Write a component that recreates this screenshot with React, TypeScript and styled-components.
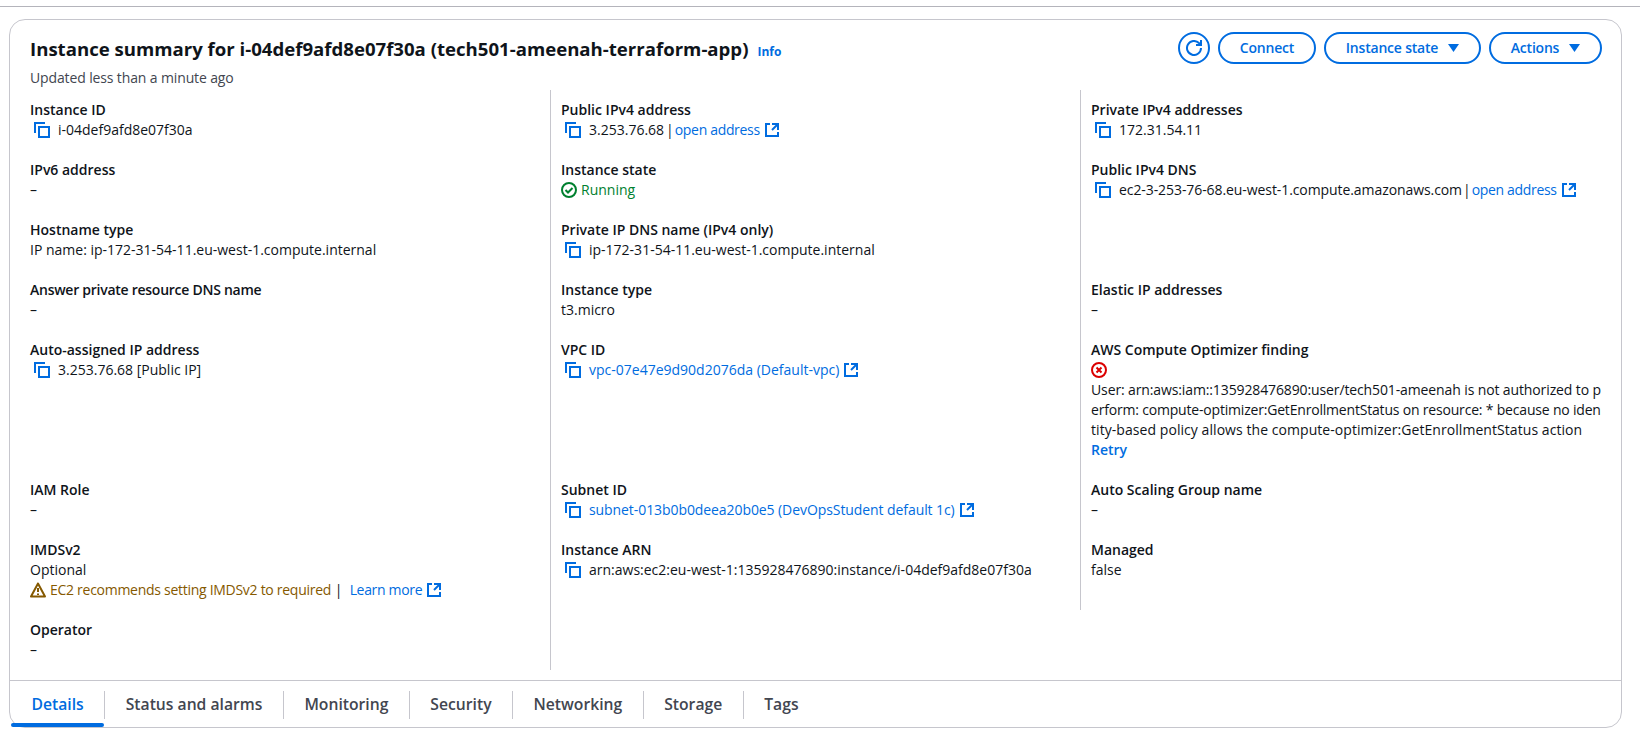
import React from 'react';
import styled, { createGlobalStyle } from 'styled-components';

const GlobalStyle = createGlobalStyle`
    html, body {
        margin: 0;
        padding: 0;
        background: #fff;
        overflow: hidden;
    }
    body {
        font-family: 'Open Sans', 'Noto Sans', sans-serif;
        font-size: 14px;
        line-height: 20px;
        color: #0f141a;
    }
`;

const Page = styled.div`
    width: 1640px;
    height: 729px;
    box-sizing: border-box;
    padding: 6px 18px 0 9px;
`;

const TopRule = styled.div`
    height: 1px;
    margin: 0 -18px 12px -9px;
    background: #b4b4bb;
`;

const Card = styled.section`
    height: 709px;
    box-sizing: border-box;
    border: 1px solid #c6c6cd;
    border-radius: 16px;
    display: flex;
    flex-direction: column;
`;

const Header = styled.header`
    height: 70px;
    box-sizing: border-box;
    padding: 12px 19px 0 20px;
    display: flex;
    justify-content: space-between;
    align-items: flex-start;
`;

const TitleBlock = styled.div`
    padding-top: 4px;
`;

const TitleRow = styled.div`
    display: flex;
    align-items: baseline;
    gap: 9px;
`;

const Title = styled.h1`
    margin: 0;
    font-size: 18.6px;
    line-height: 26px;
    font-weight: 700;
`;

const InfoLink = styled.a`
    font-size: 12px;
    font-weight: 700;
    color: #006ce0;
`;

const Updated = styled.div`
    margin-top: 6px;
    color: #424650;
    letter-spacing: -0.13px;
`;

const Actions = styled.div`
    display: flex;
    align-items: center;
    gap: 8px;
`;

const IconButton = styled.button`
    width: 32px;
    height: 32px;
    padding: 0;
    border: 2px solid #006ce0;
    border-radius: 50%;
    background: #fff;
    color: #006ce0;
    display: flex;
    align-items: center;
    justify-content: center;
`;

const PillButton = styled.button<{ $width: number }>`
    width: ${(props): number => props.$width}px;
    height: 32px;
    padding: 0;
    border: 2px solid #006ce0;
    border-radius: 20px;
    background: #fff;
    color: #006ce0;
    font: 600 14px/20px 'Open Sans', 'Noto Sans', sans-serif;
    letter-spacing: -0.2px;
    display: flex;
    align-items: center;
    justify-content: center;
    gap: 10px;
`;

const Grid = styled.div`
    flex: 1;
    display: grid;
    grid-template-columns: 540px 530px 1fr;
    margin-bottom: 10px;
`;

const Cell = styled.div<{ $divider?: boolean }>`
    box-sizing: border-box;
    padding: 10px 20px 10px ${(props): string => (props.$divider ? '10px' : '20px')};
    border-left: ${(props): string => (props.$divider ? '1px solid #c6c6cd' : 'none')};
`;

const Label = styled.div<{ $tight?: boolean }>`
    font-weight: 600;
    ${(props): string => (props.$tight ? 'letter-spacing: -0.26px;' : '')}
`;

const Value = styled.div`
    display: flex;
    align-items: center;
    white-space: pre;
`;

const CopyWrap = styled.span`
    display: inline-flex;
    margin: 0 8px 0 4px;
    color: #006ce0;
`;

const Link = styled.a<{ $tight?: boolean }>`
    color: #006ce0;
    ${(props): string => (props.$tight ? 'letter-spacing: -0.33px;' : '')}
`;

const ExternalWrap = styled.span`
    display: inline-flex;
    margin-left: 4px;
    color: #006ce0;
`;

const Pipe = styled.span<{ $before: number }>`
    margin: 0 1px 0 ${(props): number => props.$before}px;
`;

const Status = styled.div<{ $color: string }>`
    min-height: 20px;
    display: flex;
    align-items: center;
    gap: 4px;
    color: ${(props): string => props.$color};
    white-space: pre;
`;

const Tight = styled.span<{ $by: number }>`
    letter-spacing: ${(props): number => props.$by}px;
`;

const ErrorLine = styled.div<{ $by: number }>`
    white-space: pre;
    letter-spacing: ${(props): number => props.$by}px;
`;

const RetryLink = styled.a`
    display: block;
    font-weight: 600;
    color: #006ce0;
`;

const Tabs = styled.nav`
    height: 47px;
    box-sizing: border-box;
    border-top: 1px solid #c6c6cd;
    display: flex;
    align-items: flex-start;
    padding: 10px 0 0 1px;
`;

const Tab = styled.div<{ $active?: boolean; $last?: boolean }>`
    position: relative;
    height: 28px;
    box-sizing: border-box;
    padding: 3px 20.5px 0;
    font-size: 15.7px;
    font-weight: 600;
    color: ${(props): string => (props.$active ? '#006ce0' : '#424650')};
    border-right: ${(props): string => (props.$last ? 'none' : '1px solid #c6c6cd')};
    ${(props): string =>
        props.$active
            ? `&::after {
                content: '';
                position: absolute;
                left: 0;
                right: 0;
                bottom: -8px;
                height: 4px;
                border-radius: 2px;
                background: #006ce0;
            }`
            : ''}
`;

const Svg = styled.svg`
    display: block;
    fill: none;
    stroke: currentColor;
    stroke-width: 2;
    flex: none;
`;

const CopyIcon: React.FC = () => (
    <CopyWrap>
        <Svg width="16" height="16" viewBox="0 0 16 16">
            <path d="M1 11V1h10" />
            <path d="M5 5h10v10H5z" />
        </Svg>
    </CopyWrap>
);

const ExternalIcon: React.FC = () => (
    <ExternalWrap>
        <Svg width="16" height="16" viewBox="0 0 16 16">
            <path d="M14 8V2H8" />
            <path d="M14 2 8 8" />
            <path d="M6 2H2v12h12v-4" />
        </Svg>
    </ExternalWrap>
);

const RefreshIcon: React.FC = () => (
    <Svg width="16" height="16" viewBox="0 0 16 16">
        <path d="M10 5h5V0" />
        <path d="M15 8a7 7 0 1 1-2.05-4.95L15 5" />
    </Svg>
);

const Caret: React.FC = () => (
    <svg width="11" height="8" viewBox="0 0 11 8">
        <path d="M0 0h11L5.5 8z" fill="currentColor" />
    </svg>
);

const CheckIcon: React.FC = () => (
    <Svg width="16" height="16" viewBox="0 0 16 16">
        <circle cx="8" cy="8" r="7" />
        <path d="m4.5 8 2.5 2.5 4.5-4.5" />
    </Svg>
);

const ErrorIcon: React.FC = () => (
    <Svg width="16" height="16" viewBox="0 0 16 16">
        <circle cx="8" cy="8" r="7" />
        <path d="m5.5 5.5 5 5M10.5 5.5l-5 5" />
    </Svg>
);

const WarningIcon: React.FC = () => (
    <Svg width="16" height="16" viewBox="0 0 16 16">
        <path d="M8 1.5 1 14.5h14z" strokeLinejoin="round" />
        <path d="M8 6v4M8 11.5v1.5" />
    </Svg>
);

const Dash: React.FC = () => <Value>–</Value>;

const App: React.FC = () => (
    <Page>
        <GlobalStyle />
        <TopRule />
        <Card>
            <Header>
                <TitleBlock>
                    <TitleRow>
                        <Title>Instance summary for i-04def9afd8e07f30a (tech501-ameenah-terraform-app)</Title>
                        <InfoLink>Info</InfoLink>
                    </TitleRow>
                    <Updated>Updated less than a minute ago</Updated>
                </TitleBlock>
                <Actions>
                    <IconButton><RefreshIcon /></IconButton>
                    <PillButton $width={98}>Connect</PillButton>
                    <PillButton $width={157}>Instance state <Caret /></PillButton>
                    <PillButton $width={113}>Actions <Caret /></PillButton>
                </Actions>
            </Header>
            <Grid>
                <Cell>
                    <Label>Instance ID</Label>
                    <Value><CopyIcon />i-04def9afd8e07f30a</Value>
                </Cell>
                <Cell $divider>
                    <Label>Public IPv4 address</Label>
                    <Value><CopyIcon />3.253.76.68<Pipe $before={2}>|</Pipe><Link $tight>open address</Link><ExternalIcon /></Value>
                </Cell>
                <Cell $divider>
                    <Label>Private IPv4 addresses</Label>
                    <Value><CopyIcon />172.31.54.11</Value>
                </Cell>

                <Cell>
                    <Label>IPv6 address</Label>
                    <Dash />
                </Cell>
                <Cell $divider>
                    <Label>Instance state</Label>
                    <Status $color="#00802f"><CheckIcon />Running</Status>
                </Cell>
                <Cell $divider>
                    <Label>Public IPv4 DNS</Label>
                    <Value><CopyIcon /><Tight $by={-0.08}>ec2-3-253-76-68.eu-west-1.compute.amazonaws.com</Tight><Pipe $before={1}>|</Pipe><Link $tight>open address</Link><ExternalIcon /></Value>
                </Cell>

                <Cell>
                    <Label>Hostname type</Label>
                    <Value>IP name: ip-172-31-54-11.eu-west-1.compute.internal</Value>
                </Cell>
                <Cell $divider>
                    <Label>Private IP DNS name (IPv4 only)</Label>
                    <Value><CopyIcon />ip-172-31-54-11.eu-west-1.compute.internal</Value>
                </Cell>
                <Cell $divider />

                <Cell>
                    <Label $tight>Answer private resource DNS name</Label>
                    <Dash />
                </Cell>
                <Cell $divider>
                    <Label>Instance type</Label>
                    <Value>t3.micro</Value>
                </Cell>
                <Cell $divider>
                    <Label>Elastic IP addresses</Label>
                    <Dash />
                </Cell>

                <Cell>
                    <Label>Auto-assigned IP address</Label>
                    <Value><CopyIcon />3.253.76.68 [Public IP]</Value>
                </Cell>
                <Cell $divider>
                    <Label>VPC ID</Label>
                    <Value><CopyIcon /><Link>vpc-07e47e9d90d2076da (Default-vpc)</Link><ExternalIcon /></Value>
                </Cell>
                <Cell $divider>
                    <Label>AWS Compute Optimizer finding</Label>
                    <Status $color="#db0000"><ErrorIcon /></Status>
                    <ErrorLine $by={-0.12}>User: arn:aws:iam::135928476890:user/tech501-ameenah is not authorized to p</ErrorLine>
                    <ErrorLine $by={-0.19}>erform: compute-optimizer:GetEnrollmentStatus on resource: * because no iden</ErrorLine>
                    <ErrorLine $by={0.06}>tity-based policy allows the compute-optimizer:GetEnrollmentStatus action</ErrorLine>
                    <RetryLink>Retry</RetryLink>
                </Cell>

                <Cell>
                    <Label>IAM Role</Label>
                    <Dash />
                </Cell>
                <Cell $divider>
                    <Label>Subnet ID</Label>
                    <Value><CopyIcon /><Link><Tight $by={-0.08}>subnet-013b0b0deea20b0e5 (DevOpsStudent default 1c)</Tight></Link><ExternalIcon /></Value>
                </Cell>
                <Cell $divider>
                    <Label>Auto Scaling Group name</Label>
                    <Dash />
                </Cell>

                <Cell>
                    <Label>IMDSv2</Label>
                    <Value>Optional</Value>
                    <Value>
                        <Status $color="#855900"><WarningIcon /><Tight $by={-0.28}>EC2 recommends setting IMDSv2 to required</Tight></Status> |  <Link $tight>Learn more</Link><ExternalIcon />
                    </Value>
                </Cell>
                <Cell $divider>
                    <Label>Instance ARN</Label>
                    <Value><CopyIcon />arn:aws:ec2:eu-west-1:135928476890:instance/i-04def9afd8e07f30a</Value>
                </Cell>
                <Cell $divider>
                    <Label>Managed</Label>
                    <Value>false</Value>
                </Cell>

                <Cell>
                    <Label>Operator</Label>
                    <Dash />
                </Cell>
                <Cell $divider />
            </Grid>
            <Tabs>
                <Tab $active>Details</Tab>
                <Tab>Status and alarms</Tab>
                <Tab>Monitoring</Tab>
                <Tab>Security</Tab>
                <Tab>Networking</Tab>
                <Tab>Storage</Tab>
                <Tab $last>Tags</Tab>
            </Tabs>
        </Card>
    </Page>
);

export default App;
